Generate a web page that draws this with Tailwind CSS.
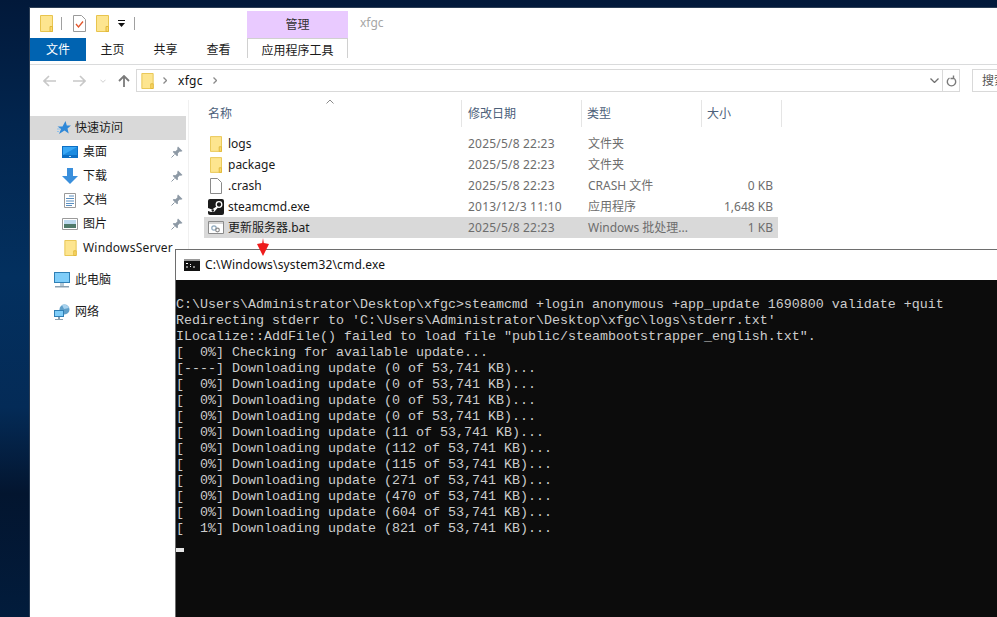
<!DOCTYPE html>
<html lang="zh-CN">
<head>
    <meta charset="UTF-8">
    <script src="https://cdn.jsdelivr.net/npm/@tailwindcss/browser@4"></script>
    <title>xfgc</title>
</head>
<body class="relative h-[617px] w-[997px] overflow-hidden bg-[linear-gradient(180deg,#02193a_0%,#02254e_20%,#03305f_45%,#042b57_66%,#03152f_80%,#021c3c_100%)] font-['Noto_Sans','Noto_Sans_CJK_SC',sans-serif] text-[12px] text-[#1a1a1a]">

    <svg class="hidden">
        <symbol id="folder" viewBox="0 0 13 17">
            <path d="M.5.5h12v16H.5z" fill="#fde58f" stroke="#e8c44e"/>
            <path d="M10 11.500h2.500v5H10z" fill="#fcd96a" stroke="#e0b83a"/>
        </symbol>
        <symbol id="pin" viewBox="0 0 12 12">
            <path d="M7 .5 11.500 5 10 5.800 8.700 5.500 6.800 7.500 7 9.500 6 10.200 1.800 6 2.500 5 4.500 5.200 6.500 3.300 6.200 2z" fill="#8d99a5"/>
            <path d="M3.500 8.500.5 11.500" stroke="#8d99a5"/>
        </symbol>
    </svg>

    <!-- explorer window -->
    <div class="absolute left-[29px] top-[7px] flex h-[620px] w-[1040px] flex-col border-l border-t border-[#2c3e55] bg-white">
        <!-- title row -->
        <div class="flex h-[30px] items-start">
            <div class="flex h-[30px] w-[217px] items-center">
                <svg class="ml-[10px] h-[17px] w-[13px]"><use href="#folder"/></svg>
                <div class="ml-[8px] h-[13px] w-px bg-[#a0a0a0]"></div>
                <svg class="ml-[11px] h-[17px] w-[13px]" viewBox="0 0 13 17">
                    <path d="M.5.500h8l4 4v12H.5z" fill="#fff" stroke="#9a9a9a"/>
                    <path d="M3 9l2.500 3L10 6.500" fill="none" stroke="#e2552b" stroke-width="1.300"/>
                </svg>
                <svg class="ml-[10px] h-[17px] w-[13px]"><use href="#folder"/></svg>
                <svg class="ml-[9px] h-[7px] w-[8px]" viewBox="0 0 8 7"><path d="M0 0h7v1H0zM0 3h7L3.500 7z" fill="#111"/></svg>
                <div class="ml-[8px] h-[13px] w-px bg-[#a0a0a0]"></div>
            </div>
            <div class="mt-[3px] flex h-[27px] w-[101px] items-center justify-center bg-[#e9caff] text-[#333]">管理</div>
            <div class="ml-[12px] pt-[6px] text-[#a6a6a6]">xfgc</div>
        </div>

        <!-- ribbon tabs -->
        <div class="flex h-[27px] items-start border-b border-[#dadbdc]">
            <div class="flex h-[23px] w-[56px] items-center justify-center bg-[#0063b1] text-white">文件</div>
            <div class="flex h-[23px] w-[53px] items-center justify-center">主页</div>
            <div class="flex h-[23px] w-[53px] items-center justify-center">共享</div>
            <div class="flex h-[23px] w-[53px] items-center justify-center">查看</div>
            <div class="ml-[2px] flex h-[20px] w-[101px] items-center justify-center border-x border-t border-[#d0d0d0] pt-[4px]">应用程序工具</div>
        </div>

        <!-- address row -->
        <div class="flex h-[28px] items-end pb-[1px]">
            <div class="flex h-[22px] w-[106px] shrink-0 items-center text-[#c4c4c4]">
                <svg class="ml-[13px] h-[12px] w-[13px]" viewBox="0 0 13 12"><path d="M6 1 1 6l5 5M1 6h12" fill="none" stroke="#c8c8c8" stroke-width="1.600"/></svg>
                <svg class="ml-[17px] h-[12px] w-[13px]" viewBox="0 0 13 12"><path d="M7 1l5 5-5 5M12 6H0" fill="none" stroke="#c8c8c8" stroke-width="1.600"/></svg>
                <svg class="ml-[14px] h-[4px] w-[6px]" viewBox="0 0 7 4"><path d="M.5.500l3 3 3-3" fill="none" stroke="#c8c8c8"/></svg>
                <svg class="ml-[12px] h-[12px] w-[12px]" viewBox="0 0 12 12"><path d="M1 6l5-5 5 5M6 1v11" fill="none" stroke="#7a7a7a" stroke-width="1.800"/></svg>
            </div>
            <div class="flex h-[23px] w-[824px] shrink-0 items-center border border-[#d9d9d9]">
                <svg class="ml-[4px] h-[16px] w-[13px]"><use href="#folder"/></svg>
                <svg class="ml-[9px] h-[7px] w-[4px]" viewBox="0 0 4 7"><path d="M.5.500l3 3-3 3" fill="none" stroke="#8a8a8a" stroke-width="1.300"/></svg>
                <span class="ml-[11px] pt-[1px] tracking-[.3px] text-[#111]">xfgc</span>
                <svg class="ml-[10px] h-[7px] w-[4px]" viewBox="0 0 4 7"><path d="M.5.500l3 3-3 3" fill="none" stroke="#8a8a8a" stroke-width="1.300"/></svg>
                <svg class="ml-auto mr-[3px] h-[5px] w-[9px]" viewBox="0 0 9 5"><path d="M.5.500l4 4 4-4" fill="none" stroke="#707070" stroke-width="1.300"/></svg>
                <div class="flex h-full w-[17px] items-center justify-center border-l border-[#d9d9d9]">
                    <svg class="h-[12px] w-[11px]" viewBox="0 0 11 12"><path d="M3.500 3a4.200 4.200 0 1 0 4 0M7.500 .5v3h-3" fill="none" stroke="#7a7a7a" stroke-width="1.400"/></svg>
                </div>
            </div>
            <div class="ml-[12px] flex h-[23px] w-[60px] shrink-0 items-center border border-[#d9d9d9] pl-[9px] text-[#555]">搜索</div>
        </div>

        <div class="flex flex-1 pt-[7px]">
            <!-- nav pane -->
            <div class="w-[156px] pt-[16px]">
                <div class="flex h-[24px] items-center bg-[#d9d9d9] pl-[27px]">
                    <svg class="h-[14px] w-[14px]" viewBox="0 0 14 14"><path d="M8.500 0l1.300 4.500H14l-3.500 3 1.200 5L7.500 9.500 2 13l2-5L.5 5.500h5z" fill="#2f88d8"/><path d="M0 8h3M0 10.500h2" stroke="#8fc2ec"/></svg>
                    <span class="ml-[4px]">快速访问</span>
                </div>
                <div class="flex h-[24px] items-center pl-[32px]">
                    <svg class="h-[12px] w-[16px]" viewBox="0 0 16 12"><path d="M0 0h16v12H0z" fill="#0d6fc4"/><path d="M1 1h14v8H1z" fill="#3aa8f5"/><path d="M1 9 15 1v8z" fill="#1c8be0"/><path d="M7 10h2v1H7z" fill="#bfe0f7"/></svg>
                    <span class="ml-[5px]">桌面</span>
                    <svg class="ml-auto mr-[3px] h-[12px] w-[12px]"><use href="#pin"/></svg>
                </div>
                <div class="flex h-[24px] items-center pl-[32px]">
                    <svg class="h-[16px] w-[16px]" viewBox="0 0 16 16"><path d="M5 0h6v8h5l-8 8-8-8h5z" fill="#3a8fdc"/></svg>
                    <span class="ml-[5px]">下载</span>
                    <svg class="ml-auto mr-[3px] h-[12px] w-[12px]"><use href="#pin"/></svg>
                </div>
                <div class="flex h-[24px] items-center pl-[34px]">
                    <svg class="h-[15px] w-[12px]" viewBox="0 0 12 15"><path d="M.5.500h11v14H.5z" fill="#fff" stroke="#9a9a9a"/><path d="M5 3h5M2 5.500h8M2 8h8M2 10.500h8M2 12.500h6" stroke="#5a8fc0"/></svg>
                    <span class="ml-[7px]">文档</span>
                    <svg class="ml-auto mr-[3px] h-[12px] w-[12px]"><use href="#pin"/></svg>
                </div>
                <div class="flex h-[24px] items-center pl-[32px]">
                    <svg class="h-[12px] w-[16px]" viewBox="0 0 16 12"><path d="M.5.500h15v11H.5z" fill="#fff" stroke="#9a9a9a"/><path d="M2 2h12v4H2z" fill="#bcd9ee"/><path d="M2 6h12v4H2z" fill="#4f7a6a"/></svg>
                    <span class="ml-[5px]">图片</span>
                    <svg class="ml-auto mr-[3px] h-[12px] w-[12px]"><use href="#pin"/></svg>
                </div>
                <div class="flex h-[24px] items-center pl-[34px]">
                    <svg class="h-[16px] w-[13px]"><use href="#folder"/></svg>
                    <span class="ml-[6px] whitespace-nowrap tracking-[.2px]">WindowsServer</span>
                </div>
                <div class="mt-[8px] flex h-[24px] items-center pl-[24px]">
                    <svg class="h-[16px] w-[16px]" viewBox="0 0 16 16"><path d="M0 0h16v11H0z" fill="#2f7fb5"/><path d="M1 1h14v9H1z" fill="#7fcdf9"/><path d="M6 11h4v3H6z" fill="#b6c8d4"/><path d="M1 14h14v1.500H1z" fill="#8aa0b0"/></svg>
                    <span class="ml-[5px]">此电脑</span>
                </div>
                <div class="mt-[8px] flex h-[24px] items-center pl-[24px]">
                    <svg class="h-[16px] w-[16px]" viewBox="0 0 16 16"><circle cx="10.500" cy="5.500" r="5" fill="#5f9fc9"/><path d="M8 1a5 5 0 0 1 7 3l-5 1z" fill="#a9d3ef"/><path d="M0 6h10v7H0z" fill="#2f7fb5"/><path d="M1 7h8v5H1z" fill="#7fcdf9"/><path d="M4 13h2v2H4zM1 15h8v1H1z" fill="#8aa0b0"/></svg>
                    <span class="ml-[5px]">网络</span>
                </div>
            </div>

            <!-- divider -->
            <div class="ml-[2px] w-px bg-[#f0f0f0]"></div>

            <!-- file list -->
            <div class="ml-[15px] w-[590px]">
                <div class="relative flex h-[27px] items-center text-[#4c607a]">
                    <svg class="absolute left-[122px] top-[-1px] h-[5px] w-[8px]" viewBox="0 0 8 5"><path d="M.5 4.500 4 1l3.500 3.500" fill="none" stroke="#8a8a8a"/></svg>
                    <div class="w-[257px] pl-[4px]">名称</div>
                    <div class="flex h-full w-[120px] items-center border-l border-[#e5e5e5] pl-[6px]">修改日期</div>
                    <div class="flex h-full w-[120px] items-center border-l border-[#e5e5e5] pl-[5px]">类型</div>
                    <div class="flex h-full w-[81px] items-center border-x border-[#e5e5e5] pl-[5px]">大小</div>
                </div>

                <div class="mt-[6px] flex h-[21px] w-[574px] items-center text-[#6d6d6d]">
                    <div class="flex w-[264px] items-center pl-[6px] text-[#1a1a1a]"><svg class="h-[16px] w-[12px]"><use href="#folder"/></svg><span class="ml-[6px]">logs</span></div>
                    <div class="w-[120px] tracking-[.2px]">2025/5/8 22:23</div>
                    <div class="w-[120px]">文件夹</div>
                    <div class="w-[65px] text-right"></div>
                </div>
                <div class="flex h-[21px] w-[574px] items-center text-[#6d6d6d]">
                    <div class="flex w-[264px] items-center pl-[6px] text-[#1a1a1a]"><svg class="h-[16px] w-[12px]"><use href="#folder"/></svg><span class="ml-[6px]">package</span></div>
                    <div class="w-[120px] tracking-[.2px]">2025/5/8 22:23</div>
                    <div class="w-[120px]">文件夹</div>
                    <div class="w-[65px] text-right"></div>
                </div>
                <div class="flex h-[21px] w-[574px] items-center text-[#6d6d6d]">
                    <div class="flex w-[264px] items-center pl-[6px] text-[#1a1a1a]"><svg class="h-[16px] w-[12px]" viewBox="0 0 12 16"><path d="M.5.500h7l4 4v11H.5z" fill="#fff" stroke="#8a8a8a"/></svg><span class="ml-[6px]">.crash</span></div>
                    <div class="w-[120px] tracking-[.2px]">2025/5/8 22:23</div>
                    <div class="w-[120px]">CRASH 文件</div>
                    <div class="w-[65px] text-right">0 KB</div>
                </div>
                <div class="flex h-[21px] w-[574px] items-center text-[#6d6d6d]">
                    <div class="flex w-[264px] items-center pl-[4px] text-[#1a1a1a]">
                        <svg class="h-[16px] w-[16px]" viewBox="0 0 16 16"><rect width="16" height="16" rx="2" fill="#1b1b1b"/><circle cx="11" cy="5.500" r="2.800" fill="none" stroke="#fff" stroke-width="1.300"/><path d="M0 9l4 1.500 4.500-3 1.500 1-4 4.500H3L0 12z" fill="#fff"/><circle cx="4.800" cy="11.500" r="1.200" fill="#1b1b1b"/></svg>
                        <span class="ml-[4px]">steamcmd.exe</span>
                    </div>
                    <div class="w-[120px] tracking-[.2px]">2013/12/3 11:10</div>
                    <div class="w-[120px]">应用程序</div>
                    <div class="w-[65px] text-right">1,648 KB</div>
                </div>
                <div class="flex h-[21px] w-[574px] items-center bg-[#d9d9d9] text-[#6d6d6d]">
                    <div class="flex w-[264px] items-center pl-[4px] text-[#1a1a1a]">
                        <svg class="h-[13px] w-[16px]" viewBox="0 0 16 13"><path d="M.5.500h15v12H.5z" fill="#fff" stroke="#8a8a8a"/><path d="M1 1h14v2H1z" fill="#d5d5d5"/><circle cx="6" cy="7" r="2.200" fill="none" stroke="#8fa9bd" stroke-width="1.200"/><circle cx="9.500" cy="9" r="1.800" fill="none" stroke="#8a8a8a" stroke-width="1.200"/></svg>
                        <span class="ml-[4px]">更新服务器.bat</span>
                    </div>
                    <div class="w-[120px] tracking-[.2px]">2025/5/8 22:23</div>
                    <div class="w-[120px] whitespace-nowrap">Windows 批处理...</div>
                    <div class="w-[65px] text-right">1 KB</div>
                </div>
            </div>
        </div>
    </div>

    <!-- cmd window -->
    <div class="absolute left-[175px] top-[249px] flex h-[380px] w-[840px] flex-col border border-[#6e6e6e] bg-white">
        <div class="flex h-[30px] shrink-0 items-center pl-[8px] text-[#111]">
            <svg class="h-[12px] w-[16px]" viewBox="0 0 16 12"><path d="M0 0h16v12H0z" fill="#111"/><path d="M0 0h16v2H0z" fill="#9a9a9a"/><path d="M2 4.500h2M2 8h2M6 5l1 1M6 8l1-1M9 8h2" stroke="#fff"/></svg>
            <span class="ml-[5px] tracking-[.15px]">C:\Windows\system32\cmd.exe</span>
        </div>
        <div class="flex flex-1 flex-col whitespace-pre bg-[#0c0c0c] pt-[17px] font-['Liberation_Mono',monospace] text-[13.333px] leading-[16px] text-[#cccccc]">
            <div>C:\Users\Administrator\Desktop\xfgc&gt;steamcmd +login anonymous +app_update 1690800 validate +quit</div>
            <div>Redirecting stderr to 'C:\Users\Administrator\Desktop\xfgc\logs\stderr.txt'</div>
            <div>ILocalize::AddFile() failed to load file "public/steambootstrapper_english.txt".</div>
            <div>[  0%] Checking for available update...</div>
            <div>[----] Downloading update (0 of 53,741 KB)...</div>
            <div>[  0%] Downloading update (0 of 53,741 KB)...</div>
            <div>[  0%] Downloading update (0 of 53,741 KB)...</div>
            <div>[  0%] Downloading update (0 of 53,741 KB)...</div>
            <div>[  0%] Downloading update (11 of 53,741 KB)...</div>
            <div>[  0%] Downloading update (112 of 53,741 KB)...</div>
            <div>[  0%] Downloading update (115 of 53,741 KB)...</div>
            <div>[  0%] Downloading update (271 of 53,741 KB)...</div>
            <div>[  0%] Downloading update (470 of 53,741 KB)...</div>
            <div>[  0%] Downloading update (604 of 53,741 KB)...</div>
            <div>[  1%] Downloading update (821 of 53,741 KB)...</div>
            <div class="flex h-[15px] items-end"><div class="h-[4px] w-[8px] bg-[#e6e6e6]"></div></div>
        </div>
    </div>

    <!-- red arrow -->
    <svg class="absolute left-[256px] top-[236px] h-[22px] w-[14px]" viewBox="0 0 14 22">
        <path d="M7 2 7.800 7 13 8 7 20 1 8 6.200 7z" fill="#ee1c1c"/>
    </svg>
</body>
</html>
